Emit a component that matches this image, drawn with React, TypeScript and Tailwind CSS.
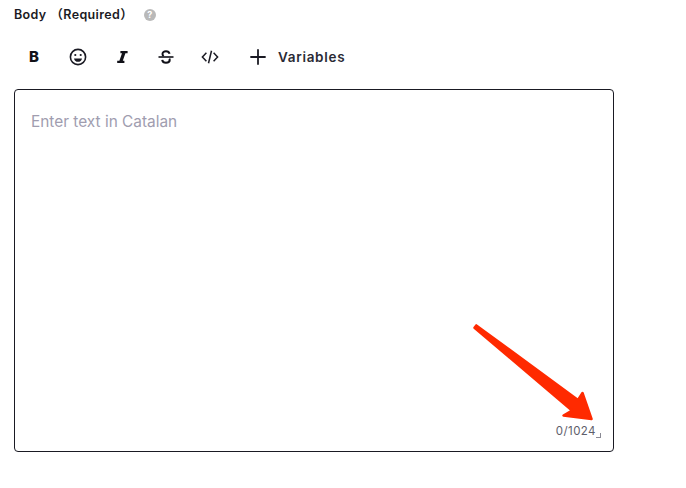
import { Plus } from "lucide-react";

function BoldIcon() {
  return (
    <span className="w-6 h-6 flex items-center justify-center text-[15px] font-extrabold text-[#111118]">
      B
    </span>
  );
}

function SmileIcon() {
  return (
    <svg width="20" height="20" viewBox="0 0 20 20" fill="none" stroke="#1a1a23" strokeWidth="1.6">
      <circle cx="10" cy="10" r="7.6" />
      <circle cx="7.3" cy="8" r="1.1" fill="#1a1a23" stroke="none" />
      <circle cx="12.7" cy="8" r="1.1" fill="#1a1a23" stroke="none" />
      <path d="M6 11.4h8c-.4 2.2-2 3.4-4 3.4s-3.6-1.2-4-3.4z" fill="#1a1a23" stroke="none" />
    </svg>
  );
}

function ItalicIcon() {
  return (
    <svg width="14" height="14" viewBox="0 0 14 14" fill="#111118">
      <path d="M5.4 1h7.2v2.2h-2.2L7.8 10.8h1.6V13H2.2v-2.2h2.2l2.6-7.6H5.4z" />
    </svg>
  );
}

function StrikeIcon() {
  return (
    <svg width="18" height="18" viewBox="0 0 18 18" fill="none" stroke="#111118" strokeWidth="2">
      <path d="M12.6 5.8C12.2 4.2 10.9 3.2 9 3.2c-2.1 0-3.5 1.1-3.5 2.7 0 .9.4 1.6 1.2 2.1" />
      <path d="M5.2 11.8c.3 1.8 1.8 3 3.8 3 2.2 0 3.7-1.1 3.7-2.8 0-.5-.1-1-.4-1.4" />
      <path d="M1.5 9h15" strokeWidth="1.6" />
    </svg>
  );
}

function CodeIcon() {
  return (
    <svg width="18" height="18" viewBox="0 0 18 18" fill="none" stroke="#1a1a23" strokeWidth="1.5">
      <path d="M5.4 4.8 1.4 9l4 4.2" />
      <path d="M12.6 4.8 16.6 9l-4 4.2" />
      <path d="M10.5 2.8 7.5 15.2" />
    </svg>
  );
}

export default function App() {
  return (
    <div className="relative w-[686px] h-[488px] bg-white font-['Inter','Noto_Sans_CJK_SC',sans-serif] overflow-hidden">
      <div className="pl-[14px] pt-[7px]">
        <div className="flex items-center h-4 text-[12.5px] font-semibold tracking-[0.35px] text-[#1a1a23]">
          <span>Body</span>
          <span className="ml-[4px]">（Required）</span>
          <span className="ml-[11px] w-3 h-3 rounded-full bg-[#b9b9b9] text-white text-[9px] font-bold flex items-center justify-center">
            ?
          </span>
        </div>

        <div className="flex items-center h-6 mt-[22px] ml-2">
          <BoldIcon />
          <div className="ml-5 w-6 flex justify-center"><SmileIcon /></div>
          <div className="ml-5 w-6 flex justify-center"><ItalicIcon /></div>
          <div className="ml-5 w-6 flex justify-center"><StrikeIcon /></div>
          <div className="ml-5 w-6 flex justify-center"><CodeIcon /></div>
          <Plus size={24} strokeWidth={1.8} className="ml-6 text-[#1a1a23]" />
          <span className="ml-2 text-[13.5px] font-semibold tracking-[0.7px] text-[#2a2a35]">Variables</span>
        </div>

        <div className="mt-[20px] w-[600px] h-[363px] border border-[#1a1a23] rounded-[4px] flex flex-col justify-between pl-4 pr-3 pt-[21px] pb-[13px]">
          <div className="text-[15.4px] leading-[22px] text-[#a09daf]">Enter text in Catalan</div>
          <div className="flex justify-end items-end">
            <span className="text-[11.5px] leading-[14px] tracking-[0.45px] text-[#5e5e6b]">0/1024</span>
            <span className="ml-0 mb-0 w-[5px] h-[5px] border-r border-b border-[#8a8a94]" />
          </div>
        </div>
      </div>

      <svg className="absolute left-0 top-0" width="686" height="488" viewBox="0 0 686 488">
        <path
          d="M474.5 327.8 L476.3 325.4 L578 400 L582.5 393 L591.5 419 L563.5 415.5 L572 410.5 Z"
          fill="#ff2a00"
          stroke="#ff2a00"
          strokeWidth="2.5"
          strokeLinejoin="round"
        />
      </svg>
    </div>
  );
}
